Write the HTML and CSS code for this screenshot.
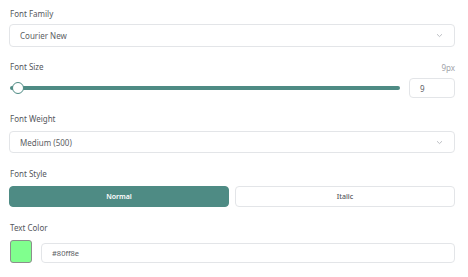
FILE: index.html
```html
<!DOCTYPE html>
<html>
<head>
<meta charset="utf-8">
<link rel="stylesheet" href="styles.css">
</head>
<body>
<div class="panel">
  <div class="section">
    <div class="label">Font Family</div>
    <div class="select">
      <span>Courier New</span>
      <svg class="chev" width="7" height="5" viewBox="0 0 7 5"><path d="M1 1.2 L3.5 3.6 L6 1.2" fill="none" stroke="#b5b8bd" stroke-width="0.9"/></svg>
    </div>
  </div>
  <div class="section">
    <div class="label-row">
      <div class="label">Font Size</div>
      <div class="value">9px</div>
    </div>
    <div class="slider-row">
      <div class="slider">
        <div class="track"></div>
        <div class="thumb"></div>
      </div>
      <div class="num">9</div>
    </div>
  </div>
  <div class="section spaced">
    <div class="label">Font Weight</div>
    <div class="select select-sm">
      <span>Medium (500)</span>
      <svg class="chev" width="7" height="5" viewBox="0 0 7 5"><path d="M1 1.2 L3.5 3.6 L6 1.2" fill="none" stroke="#b5b8bd" stroke-width="0.9"/></svg>
    </div>
  </div>
  <div class="section spaced">
    <div class="label">Font Style</div>
    <div class="toggle">
      <div class="btn active">Normal</div>
      <div class="btn">Italic</div>
    </div>
  </div>
  <div class="section spaced">
    <div class="label">Text Color</div>
    <div class="color-row">
      <div class="swatch"></div>
      <div class="text-input">#80ff8e</div>
    </div>
  </div>
</div>
</body>
</html>
```

FILE: styles.css
```css
* { box-sizing: border-box; }
html, body { margin: 0; padding: 0; background: #fff; }
body {
  font-family: "Noto Sans", "DejaVu Sans", sans-serif;
  font-size: 8px;
  color: #55575d;
}
.panel {
  width: 468px;
  padding: 8px 13px 0 9px;
  display: flex;
  flex-direction: column;
}
.section { display: flex; flex-direction: column; }
.section + .section { margin-top: 14px; }
.section.spaced { margin-top: 15px; }
.label {
  height: 12px;
  line-height: 12px;
  font-size: 8px;
  color: #55575d;
  padding-left: 1px;
}
.select {
  margin-top: 4px;
  height: 23px;
  border: 1px solid #e3e5e8;
  border-radius: 4px;
  display: flex;
  align-items: center;
  justify-content: space-between;
  padding: 0 11px 0 10px;
  color: #5c5e64;
}
.select-sm { margin-top: 6px; height: 22px; }
.chev { display: block; }
.label-row {
  display: flex;
  justify-content: space-between;
  align-items: center;
}
.value { color: #a0a2a8; font-size: 8px; }
.slider-row {
  margin-top: 5px;
  display: flex;
  align-items: center;
  gap: 9px;
}
.slider {
  position: relative;
  flex: 1;
  height: 20px;
  display: flex;
  align-items: center;
  padding-left: 1px;
}
.track {
  width: 100%;
  height: 4px;
  background: #4e8b84;
  border-radius: 2px;
}
.thumb {
  position: absolute;
  left: 3px;
  top: 4px;
  width: 12px;
  height: 12px;
  border-radius: 50%;
  background: #fff;
  border: 1px solid #4e8b84;
}
.num {
  width: 46px;
  height: 20px;
  border: 1px solid #e3e5e8;
  border-radius: 4px;
  display: flex;
  align-items: center;
  padding-left: 10px;
  color: #5c5e64;
}
.toggle {
  margin-top: 6px;
  display: flex;
  gap: 6px;
}
.btn {
  flex: 1;
  height: 21px;
  border: 1px solid #e3e5e8;
  border-radius: 4px;
  display: flex;
  align-items: center;
  justify-content: center;
  font-size: 7px;
  font-weight: 500;
  color: #55575d;
}
.btn.active {
  background: #4e8b84;
  border-color: #4e8b84;
  color: #fff;
  font-weight: 600;
}
.color-row {
  margin-top: 6px;
  display: flex;
  align-items: flex-end;
  gap: 9px;
}
.swatch {
  width: 22px;
  height: 23px;
  margin-left: 1px;
  background: #80ff8e;
  border: 1px solid #8c8f8c;
  border-radius: 3px;
}
.text-input {
  flex: 1;
  height: 20px;
  border: 1px solid #e3e5e8;
  border-radius: 4px;
  display: flex;
  align-items: center;
  padding-left: 10px;
  color: #5c5e64;
  font-size: 7.5px;
}
```
